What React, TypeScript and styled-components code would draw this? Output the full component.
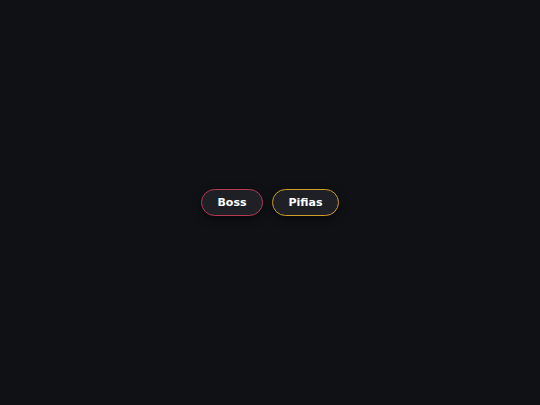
import React from 'react';
import styled, { createGlobalStyle } from 'styled-components';

const Global = createGlobalStyle`
  html, body {
    margin: 0;
    padding: 0;
    background: #0f1115;
  }
`;

const Screen = styled.div`
  width: 540px;
  height: 405px;
  display: flex;
  align-items: center;
  justify-content: center;
  gap: 9px;
  background: #0f1115;
  padding-bottom: 1px;
  box-sizing: border-box;
`;

const Pill = styled.button<{ accent: string }>`
  height: 27px;
  padding: 1px 15.5px 0;
  border-radius: 14px;
  border: 1px solid ${p => p.accent};
  background: #1e2026;
  color: #ffffff;
  font-family: 'DejaVu Sans', sans-serif;
  font-weight: bold;
  font-size: 11px;
  box-shadow: 0 3px 8px rgba(0, 0, 0, 0.55);
  cursor: pointer;
`;

export default function App() {
  return (
    <>
      <Global />
      <Screen>
        <Pill accent="#b83a52">Boss</Pill>
        <Pill accent="#d09e28">Pifias</Pill>
      </Screen>
    </>
  );
}
